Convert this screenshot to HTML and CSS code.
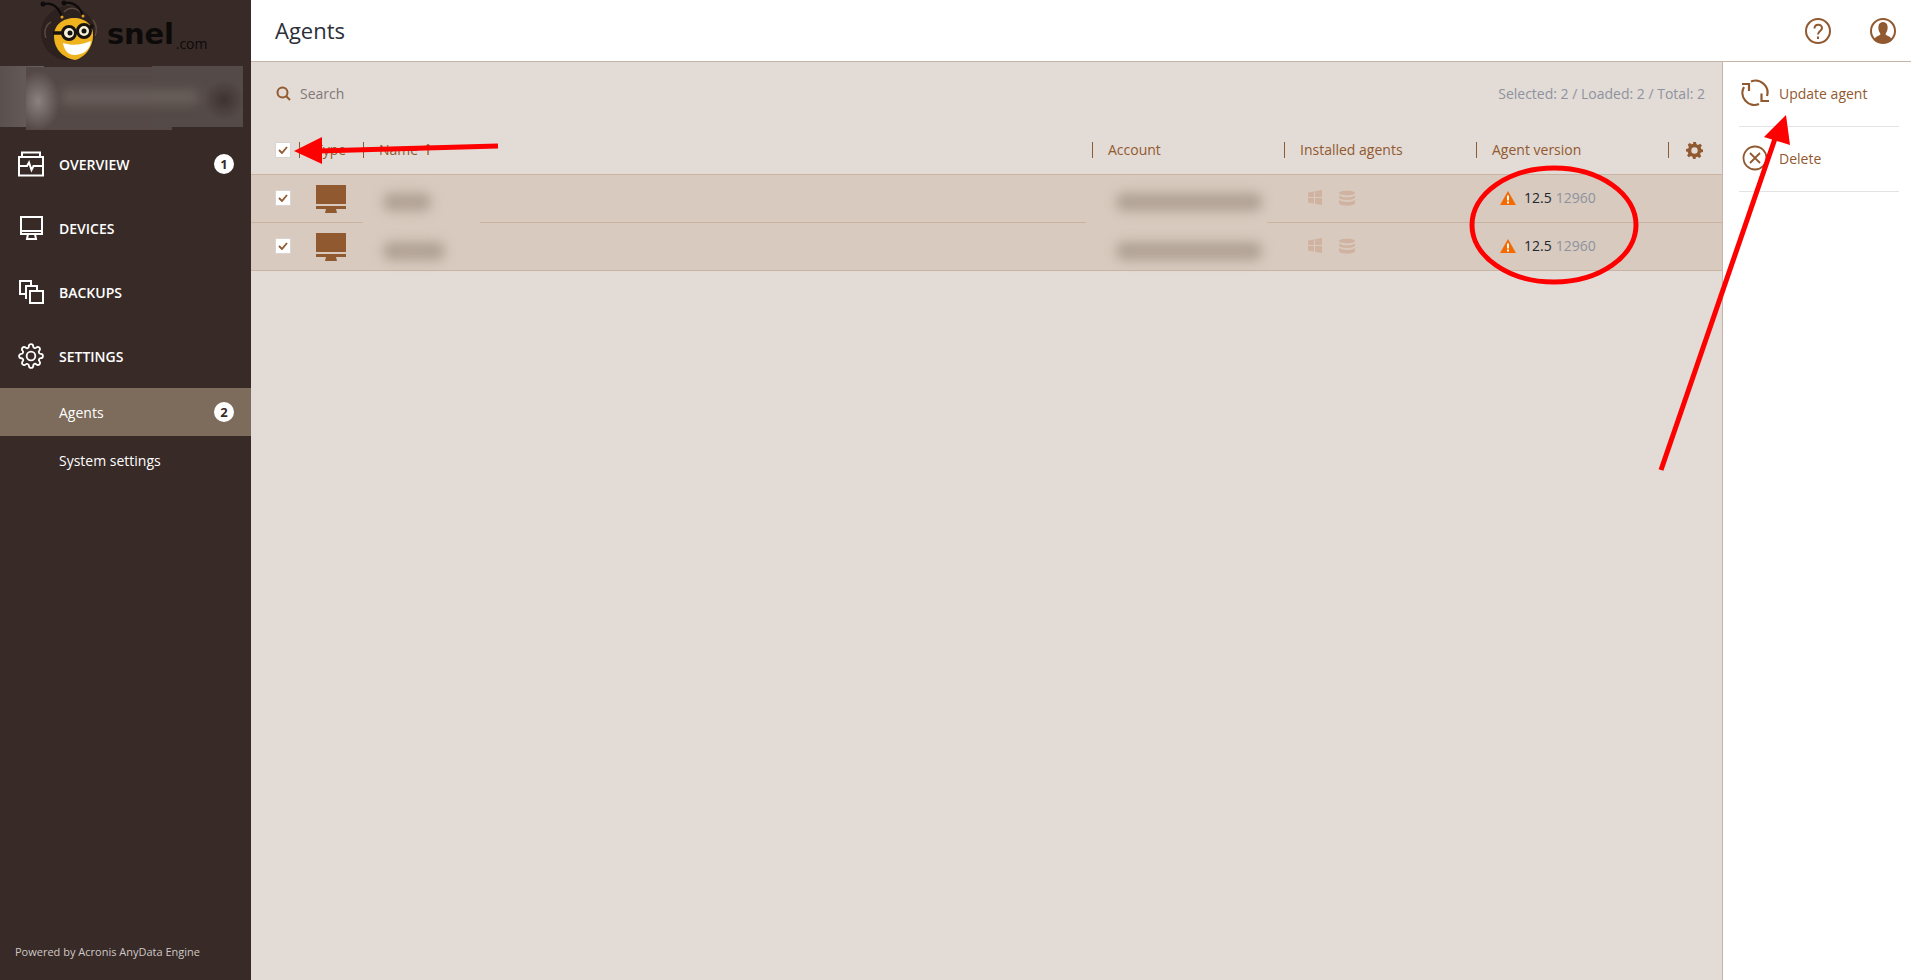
FILE: index.html
```html
<!DOCTYPE html>
<html lang="en">
<head>
    <meta charset="UTF-8">
    <title>Agents</title>
    <link rel="stylesheet" href="styles.css">
</head>
<body>
    <aside class="sidebar">
        <div class="logo">
            <svg class="logo-bee" width="60" height="62" viewBox="0 0 60 62">
                <circle cx="28" cy="33" r="27" fill="#2c211e"/>
                <path d="M6 38C3 30 7 24 11 22M24 12C30 6 38 8 42 14M53 20C57 25 57 31 55 36" stroke="#5a473d" stroke-width="1.500" fill="none"/>
                <path d="M5 4C13 2 19 8 22 17M25 3C33 1 40 7 43 16" stroke="#0e0c0b" stroke-width="2.200" fill="none"/>
                <circle cx="3" cy="4" r="2.500" fill="#0e0c0b"/><circle cx="24" cy="3" r="2.500" fill="#0e0c0b"/>
                <circle cx="22" cy="17" r="1.500" fill="#e8a020"/><circle cx="43" cy="16" r="1.500" fill="#e8a020"/>
                <path d="M14 36C14 24 24 18 34 18C46 18 54 26 53 36C53 48 44 58 35 60C24 58 14 50 14 36Z" fill="#eeb31f"/>
                <path d="M23 43C32 46 42 45 51 41C50 50 43 55 34 55C28 55 24 50 23 43Z" fill="#fff"/>
                <path d="M13 33H23M36 32H38M50 28L53 25" stroke="#181210" stroke-width="3.500"/>
                <circle cx="29" cy="33" r="6.500" fill="#f7efd8" stroke="#181210" stroke-width="3"/>
                <circle cx="44" cy="31" r="6.500" fill="#f7efd8" stroke="#181210" stroke-width="3"/>
                <circle cx="30" cy="33" r="2.500" fill="#111"/><circle cx="44" cy="31" r="2.500" fill="#111"/>
            </svg>
            <span class="logo-name">snel</span><span class="logo-tld">.com</span>
        </div>

        <div class="account-blur">
            <div class="blur-part blur-left"></div>
            <div class="blur-part blur-mid"></div>
            <div class="blur-part blur-right"></div>
            <div class="blur-text"></div>
        </div>

        <nav class="main-nav">
            <a class="nav-item" href="#">
                <svg class="nav-icon" width="26" height="26" viewBox="0 0 26 26" fill="none" stroke="#fff" stroke-width="2">
                    <path d="M4 1.500H22V6H4ZM1 6H25V24.500H1ZM1 15H9L11 11.500L13.500 19L15.500 15H25"/>
                </svg>
                <span>OVERVIEW</span>
                <b class="badge">1</b>
            </a>
            <a class="nav-item" href="#">
                <svg class="nav-icon" width="26" height="26" viewBox="0 0 26 26" fill="none" stroke="#fff" stroke-width="2">
                    <path d="M3 2H24V19H3ZM3 16H24M10 19L9 24H18L17 19"/>
                </svg>
                <span>DEVICES</span>
            </a>
            <a class="nav-item" href="#">
                <svg class="nav-icon" width="26" height="26" viewBox="0 0 26 26" fill="none" stroke="#fff" stroke-width="2">
                    <path d="M8 15H2V2H13V7M8 20V7H19V12"/>
                    <rect x="12" y="12" width="13" height="12"/>
                </svg>
                <span>BACKUPS</span>
            </a>
            <a class="nav-item" href="#">
                <svg class="nav-icon" width="26" height="26" viewBox="0 0 24 24" fill="none" stroke="#fff" stroke-width="1.700">
                    <circle cx="12" cy="12" r="4"/>
                    <path d="M19.4 15a1.65 1.65 0 0 0 .33 1.820l.06.06a2 2 0 0 1 0 2.830 2 2 0 0 1-2.830 0l-.06-.06a1.65 1.65 0 0 0-1.820-.33 1.65 1.65 0 0 0-1 1.510V21a2 2 0 0 1-2 2 2 2 0 0 1-2-2v-.09A1.65 1.65 0 0 0 9 19.4a1.65 1.65 0 0 0-1.820.33l-.06.06a2 2 0 0 1-2.830 0 2 2 0 0 1 0-2.830l.06-.06a1.65 1.65 0 0 0 .33-1.820 1.65 1.65 0 0 0-1.510-1H3a2 2 0 0 1-2-2 2 2 0 0 1 2-2h.09A1.65 1.65 0 0 0 4.600 9a1.65 1.65 0 0 0-.33-1.820l-.06-.06a2 2 0 0 1 0-2.830 2 2 0 0 1 2.830 0l.06.06a1.65 1.65 0 0 0 1.820.33H9a1.65 1.65 0 0 0 1-1.510V3a2 2 0 0 1 2-2 2 2 0 0 1 2 2v.09a1.65 1.65 0 0 0 1 1.510 1.65 1.65 0 0 0 1.820-.33l.06-.06a2 2 0 0 1 2.830 0 2 2 0 0 1 0 2.830l-.06.06a1.65 1.65 0 0 0-.33 1.820V9a1.65 1.65 0 0 0 1.510 1H21a2 2 0 0 1 2 2 2 2 0 0 1-2 2h-.09a1.65 1.65 0 0 0-1.510 1z"/>
                </svg>
                <span>SETTINGS</span>
            </a>
            <a class="sub-item active" href="#">
                <span>Agents</span>
                <b class="badge">2</b>
            </a>
            <a class="sub-item" href="#"><span>System settings</span></a>
        </nav>

        <div class="powered">Powered by Acronis AnyData Engine</div>
    </aside>

    <div class="page">
        <header class="topbar">
            <h1>Agents</h1>
            <div class="top-icons">
                <svg width="28" height="28" viewBox="0 0 28 28" fill="none" stroke="#91592f" stroke-width="2">
                    <circle cx="14" cy="14" r="12"/>
                    <path d="M10.500 11.500C10.500 6.500 18 6.500 18 11C18 14 14 14 14 17.500"/>
                    <path d="M14 19.500V22"/>
                </svg>
                <svg width="28" height="28" viewBox="0 0 28 28">
                    <circle cx="14" cy="14" r="12" fill="none" stroke="#91592f" stroke-width="2"/>
                    <path d="M5 23C6 19 11 19 11.500 17C9.500 14 9 11 9.500 9C10 6 12 5 14 5C16 5 18 6 18.500 9C19 11 18.500 14 16.500 17C17 19 22 19 23 23C18 27 10 27 5 23Z" fill="#91592f"/>
                </svg>
            </div>
        </header>

        <div class="content">
            <main class="agents">
                <div class="toolbar">
                    <div class="search">
                        <svg width="15" height="15" viewBox="0 0 15 15" fill="none" stroke="#91592f" stroke-width="2">
                            <circle cx="6.500" cy="6.500" r="5"/>
                            <path d="M10 10L14 14"/>
                        </svg>
                        <span>Search</span>
                    </div>
                    <div class="counts">Selected: 2 / Loaded: 2 / Total: 2</div>
                </div>

                <div class="grid-row head-row">
                    <div class="check-cell"><span class="check"><svg width="10" height="8" viewBox="0 0 10 8"><path d="M1 4L4 7L9 1" fill="none" stroke="#91592f" stroke-width="1.800"/></svg></span></div>
                    <div class="th">Type</div>
                    <div class="th">Name <span class="sort">↑</span></div>
                    <div class="th">Account</div>
                    <div class="th">Installed agents</div>
                    <div class="th">Agent version</div>
                    <div class="th th-gear">
                        <svg width="17" height="17" viewBox="0 0 24 24">
                            <path fill="#91592f" fill-rule="evenodd" d="M10 0H14L14.800 3.300L17.100 4.300L20 2.500L22.500 5L20.700 7.900L21.700 10.200L24 10.500V14L20.900 14.800L19.900 17.100L21.500 20L19 22.500L16.100 20.700L13.800 21.700L13.500 24H10L9.200 20.900L6.900 19.900L4 21.500L1.500 19L3.300 16.100L2.300 13.800L0 13.500V10L3.100 9.200L4.100 6.900L2.500 4L5 1.500L7.900 3.300L10.200 2.300ZM12 7.500A4.500 4.500 0 1 0 12 16.500A4.500 4.500 0 1 0 12 7.500Z"/>
                        </svg>
                    </div>
                </div>

                <div class="rows">
                    <div class="grid-row agent-row">
                        <div class="check-cell"><span class="check"><svg width="10" height="8" viewBox="0 0 10 8"><path d="M1 4L4 7L9 1" fill="none" stroke="#91592f" stroke-width="1.800"/></svg></span></div>
                        <div class="td">
                            <svg class="machine" width="30" height="28" viewBox="0 0 30 28"><path fill="#91592f" d="M0 0H30V19H0ZM0 21H30V24H0ZM10 24H20L21 28H9Z"/></svg>
                        </div>
                        <div class="td"></div>
                        <div class="td"></div>
                        <div class="td td-agents">
                            <svg width="14" height="15" viewBox="0 0 14 15"><path fill="#cfb3a0" d="M0 2.500L6 1.500V7H0ZM7 1.300L14 0V7H7ZM0 8H6V13.500L0 12.500ZM7 8H14V15L7 13.700Z"/></svg>
                            <svg width="16" height="16" viewBox="0 0 16 16"><path fill="#cfb3a0" d="M0 3C0 0 16 0 16 3C16 6 0 6 0 3ZM0 5.500C3 8 13 8 16 5.500V8C13 10.500 3 10.500 0 8ZM0 10C3 12.500 13 12.500 16 10V13C16 16.500 0 16.500 0 13Z"/></svg>
                        </div>
                        <div class="td td-version">
                            <svg width="16" height="14" viewBox="0 0 16 14"><path fill="#f56a00" d="M8 0L16 14H0Z"/><path stroke="#fff" stroke-width="2" d="M8 4.500V9.500M8 10.500V12.500"/></svg>
                            <span class="ver">12.5</span> <span class="build">12960</span>
                        </div>
                        <div class="td"></div>
                    </div>
                    <div class="grid-row agent-row">
                        <div class="check-cell"><span class="check"><svg width="10" height="8" viewBox="0 0 10 8"><path d="M1 4L4 7L9 1" fill="none" stroke="#91592f" stroke-width="1.800"/></svg></span></div>
                        <div class="td">
                            <svg class="machine" width="30" height="28" viewBox="0 0 30 28"><path fill="#91592f" d="M0 0H30V19H0ZM0 21H30V24H0ZM10 24H20L21 28H9Z"/></svg>
                        </div>
                        <div class="td"></div>
                        <div class="td"></div>
                        <div class="td td-agents">
                            <svg width="14" height="15" viewBox="0 0 14 15"><path fill="#cfb3a0" d="M0 2.500L6 1.500V7H0ZM7 1.300L14 0V7H7ZM0 8H6V13.500L0 12.500ZM7 8H14V15L7 13.700Z"/></svg>
                            <svg width="16" height="16" viewBox="0 0 16 16"><path fill="#cfb3a0" d="M0 3C0 0 16 0 16 3C16 6 0 6 0 3ZM0 5.500C3 8 13 8 16 5.500V8C13 10.500 3 10.500 0 8ZM0 10C3 12.500 13 12.500 16 10V13C16 16.500 0 16.500 0 13Z"/></svg>
                        </div>
                        <div class="td td-version">
                            <svg width="16" height="14" viewBox="0 0 16 14"><path fill="#f56a00" d="M8 0L16 14H0Z"/><path stroke="#fff" stroke-width="2" d="M8 4.500V9.500M8 10.500V12.500"/></svg>
                            <span class="ver">12.5</span> <span class="build">12960</span>
                        </div>
                        <div class="td"></div>
                    </div>

                    <!-- redacted names and accounts, painted over the rows -->
                    <div class="patch patch-name">
                        <i class="smudge smudge-a"></i>
                        <i class="smudge smudge-b"></i>
                    </div>
                    <div class="patch patch-account">
                        <i class="smudge smudge-c"></i>
                        <i class="smudge smudge-d"></i>
                    </div>
                </div>
            </main>

            <aside class="actions">
                <a class="action" href="#">
                    <svg width="30" height="30" viewBox="6 5 30 30" fill="none" stroke="#91592f" stroke-width="2.200">
                        <path d="M16 8.500A12 12 0 0 1 32 23"/>
                        <path d="M26.500 20.500V28H34"/>
                        <path d="M24 31A12 12 0 0 1 9 14"/>
                        <path d="M7 11H14V18"/>
                    </svg>
                    <span>Update agent</span>
                </a>
                <a class="action" href="#">
                    <svg width="30" height="30" viewBox="-1 -2 30 30" fill="none" stroke="#91592f" stroke-width="1.800">
                        <circle cx="13" cy="13" r="11.500"/>
                        <path d="M8 8L18 18M18 8L8 18"/>
                    </svg>
                    <span>Delete</span>
                </a>
            </aside>
        </div>
    </div>

    <!-- red annotations drawn on top of the screenshot -->
    <svg class="marks" width="1911" height="980" viewBox="0 0 1911 980">
        <path d="M498 146L318 151" stroke="#fe0000" stroke-width="5"/>
        <path d="M294 151L322 137L322 164Z" fill="#fe0000"/>
        <path d="M1661 470L1778 130" stroke="#fe0000" stroke-width="5"/>
        <path d="M1786 115L1790 145L1764 137Z" fill="#fe0000"/>
        <ellipse cx="1554" cy="225" rx="82" ry="57" fill="none" stroke="#fe0000" stroke-width="5"/>
    </svg>
</body>
</html>
```

FILE: styles.css
```css
* { box-sizing: border-box; }
html, body { height: 100%; }
body { margin: 0; display: flex; height: 100vh; overflow: hidden; font-family: 'Open Sans', sans-serif; font-size: 14px; background: #e3dbd6; color: #2b2f38; }
a { text-decoration: none; color: inherit; }

.sidebar { width: 251px; flex: none; background: #372a27; color: #fff; display: flex; flex-direction: column; }
.logo { height: 66px; display: flex; align-items: flex-start; padding-left: 40px; overflow: hidden; color: #0d0b0a; }
.logo-bee { flex: none; margin-right: 7px; }
.logo-name { font-family: 'DejaVu Sans', sans-serif; font-weight: 700; font-size: 29px; line-height: 69px; letter-spacing: -0.2px; }
.logo-tld { font-size: 14px; line-height: 87px; margin-left: 2px; }

.account-blur { height: 65px; position: relative; overflow: hidden; }
.blur-part { position: absolute; top: 0; height: 61px; }
.blur-left { left: 0; width: 44px; background: linear-gradient(90deg, #5a504d, #6a605d); }
.blur-mid { left: 26px; width: 146px; height: 63px; top: 1px; background: radial-gradient(ellipse 22px 30px at 12px 34px, #8b8280, transparent), #544946; }
.blur-right { left: 152px; width: 91px; background: radial-gradient(ellipse 20px 20px at 72px 34px, #3f3330, transparent), #544a47; }
.blur-text { position: absolute; left: 62px; top: 24px; width: 136px; height: 14px; background: #6a605c; filter: blur(6px); }

.main-nav { display: flex; flex-direction: column; padding-top: 1px; }
.nav-item { height: 64px; display: flex; align-items: center; padding: 0 17px 0 18px; font-size: 14px; font-weight: 600; }
.nav-icon { flex: none; margin-right: 15px; }
.nav-item span, .sub-item span { flex: 1; }
.sub-item { height: 48px; display: flex; align-items: center; padding: 0 17px 0 59px; font-size: 14px; }
.sub-item.active { background: #7d6b5b; }
.badge { width: 20px; height: 20px; border-radius: 50%; background: #fff; color: #372a27; font-size: 13px; font-weight: 700; display: flex; align-items: center; justify-content: center; }
.powered { margin-top: auto; padding: 0 0 21px 15px; font-size: 11px; color: #cfc8c5; }

.page { flex: 1; min-width: 0; display: flex; flex-direction: column; }
.topbar { height: 62px; flex: none; background: #fff; border-bottom: 1px solid #c5b5a8; display: flex; align-items: center; justify-content: space-between; padding: 0 14px 0 24px; }
.topbar h1 { margin: 0 0 2px; font-size: 22px; font-weight: 400; }
.top-icons { display: flex; gap: 37px; }

.content { flex: 1; display: flex; min-height: 0; }
.agents { flex: 1; min-width: 0; }
.actions { width: 189px; flex: none; background: #fff; border-left: 1px solid #c5b5a8; padding: 0 12px 0 16px; }
.action { height: 65px; display: flex; align-items: center; gap: 8px; border-bottom: 1px solid #e3e3e3; color: #91592f; font-size: 14px; padding: 0 0 2px 2px; }
.action svg { flex: none; }

.toolbar { height: 58px; display: flex; align-items: center; justify-content: space-between; padding: 4px 17px 0 25px; }
.search { display: flex; align-items: center; gap: 9px; color: #7f7876; }
.counts { color: #8d939e; font-size: 14px; }

.grid-row { display: grid; grid-template-columns: 48px 64px 729px 192px 192px 192px 54px; }
.head-row { height: 54px; align-items: center; padding-top: 5px; }
.check-cell { padding-left: 24px; display: flex; align-items: center; }
.check { width: 16px; height: 16px; background: #fff; border: 1px solid #d9d4d0; display: flex; align-items: center; justify-content: center; }
.th { border-left: 1px solid #91592f; height: 16px; line-height: 16px; padding-left: 15px; color: #91592f; white-space: nowrap; }
.th-gear { padding-left: 17px; }
.sort { font-family: 'DejaVu Sans', sans-serif; font-size: 15px; }

.rows { position: relative; border-top: 1px solid #c9b3a3; }
.agent-row { height: 48px; align-items: center; background: #d8cabe; border-bottom: 1px solid #c9b3a3; padding-bottom: 2px; }
.td { display: flex; align-items: center; }
.machine { margin-left: 17px; margin-top: 2px; }
.td-agents { padding-left: 24px; gap: 17px; }
.td-version { padding-left: 24px; gap: 4px; }
.ver { color: #22262e; margin-left: 4px; }
.build { color: #8d939e; }

.patch { position: absolute; background: #d8cabe; }
.patch-name { left: 112px; top: 2px; width: 117px; height: 90px; }
.patch-account { left: 835px; top: 2px; width: 181px; height: 90px; }
.smudge { position: absolute; background: #b0a195; filter: blur(6px); border-radius: 8px; }
.smudge-a { left: 20px; top: 16px; width: 48px; height: 18px; }
.smudge-b { left: 20px; top: 65px; width: 62px; height: 18px; }
.smudge-c { left: 30px; top: 16px; width: 146px; height: 18px; }
.smudge-d { left: 30px; top: 65px; width: 146px; height: 18px; }

.marks { position: absolute; left: 0; top: 0; pointer-events: none; }
```
